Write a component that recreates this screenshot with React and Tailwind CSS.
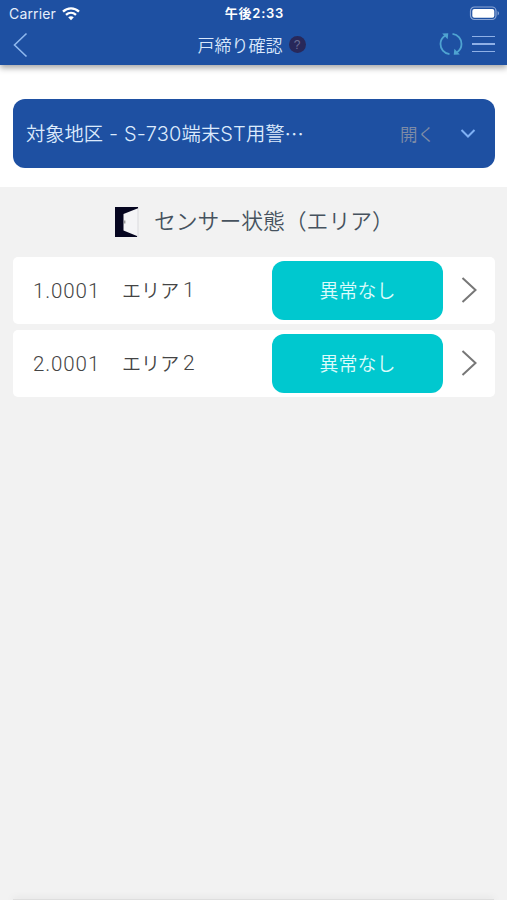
import React from 'react';

const AREAS = [
  { no: '1.0001', name: 'エリア', index: '1', status: '異常なし' },
  { no: '2.0001', name: 'エリア', index: '2', status: '異常なし' },
];

const StatusBar = () => (
  <div className="grid grid-cols-3 items-center h-[27px] pl-[9px] pr-[7px] text-white">
    <div className="flex items-center gap-[6px]">
      <span className="text-[14px] leading-none tracking-[0.15px] text-[#e6eefb] font-['Inter','Liberation_Sans',sans-serif]">Carrier</span>
      <svg width="18" height="14" viewBox="0 0 18 14" fill="none" stroke="currentColor" strokeWidth="2.3">
        <path d="M1 4.6 C5.5 0.2 12.5 0.2 17 4.6" />
        <path d="M4 7.9 C7 5.1 11 5.1 14 7.9" />
        <path d="M6.2 10.3 C7.9 8.9 10.1 8.9 11.8 10.3 L9 13.2 Z" fill="currentColor" stroke="none" />
      </svg>
    </div>
    <p className="text-center text-[13px] leading-none font-semibold whitespace-nowrap tracking-[0.75px] font-['Inter','Noto_Sans_CJK_JP',sans-serif]">午後2:33</p>
    <svg className="justify-self-end" width="31" height="15" viewBox="0 0 31 15" fill="none">
      <rect x="1.5" y="1" width="25.5" height="12.5" rx="4" stroke="#8ba6d6" strokeWidth="1.2" />
      <rect x="3.3" y="2.9" width="22" height="8.8" rx="2" fill="#fff" />
      <path d="M28.6 5 C30.5 5.9 30.5 8.6 28.6 9.5 Z" fill="#8ba6d6" />
    </svg>
  </div>
);

const Header = () => (
  <header className="relative h-[64.5px] bg-[#1e50a2] shadow-[0_3px_6px_rgba(0,0,0,0.35)]">
    <StatusBar />
    <div className="grid grid-cols-3 items-center h-[35px] pl-[12px] pr-[12px]">
      <svg width="18" height="26" viewBox="0 0 18 26" fill="none" stroke="#8fb8ee" strokeWidth="1.6">
        <path d="M14.5 1.5 L2.5 13 L14.5 24.5" />
      </svg>
      <div className="flex items-center justify-center gap-[6px] pr-[4px] whitespace-nowrap">
        <h1 className="text-[17px] leading-none text-[#d9e7fb] font-[350] font-['Noto_Sans_CJK_JP',sans-serif]">戸締り確認</h1>
        <span className="flex items-center justify-center w-[17px] h-[17px] rounded-full bg-[#28285a] text-[#6b7096] text-[12px] leading-none font-['Liberation_Sans',sans-serif]">?</span>
      </div>
      <div className="flex items-center justify-end gap-[9px]">
        <svg className="mb-[1px]" width="24" height="24" viewBox="0 0 24 24" fill="none" stroke="#4fa3d1" strokeWidth="1.8">
          <path d="M10.5 22.2 C4.8 21.3 1.5 17 1.5 12 C1.5 8.3 3.2 5.5 6 3.7" />
          <path d="M13.5 1.8 C19.2 2.7 22.5 7 22.5 12 C22.5 15.7 20.8 18.5 18 20.3" />
          <path d="M3.2 1.5 L9.3 1.3 L8.6 7.3 Z" fill="#4fa3d1" stroke="none" />
          <path d="M20.8 22.5 L14.7 22.7 L15.4 16.7 Z" fill="#4fa3d1" stroke="none" />
        </svg>
        <div className="flex flex-col gap-[6px] w-[23px] pb-[1px]">
          <span className="h-[1.6px] bg-[#8fb0e6]" />
          <span className="h-[1.6px] bg-[#8fb0e6]" />
          <span className="h-[1.6px] bg-[#8fb0e6]" />
        </div>
      </div>
    </div>
  </header>
);

const DistrictPicker = () => (
  <section className="h-[122.5px] bg-white pl-[13px] pr-[12px] pt-[34px]">
    <button className="flex items-center w-full h-[69.5px] pl-[13px] pr-[19px] rounded-[12px] bg-[#1e50a2] font-['Inter','Noto_Sans_CJK_JP',sans-serif]">
      <span className="flex flex-1 items-center pt-[2px] text-left text-[19.3px] leading-none text-[#dceafc] whitespace-pre font-[350]">
        <span>対象地区</span>
        <span className="text-[20px] tracking-[0.2px]"> - S-730</span>
        <span>端末</span>
        <span className="text-[20px] tracking-[0.2px]">ST</span>
        <span>用警</span>
        <span className="font-['Noto_Sans_CJK_JP',sans-serif]">…</span>
      </span>
      <span className="pt-[2px] text-[17.5px] leading-none text-[#7f8ca6] font-[350] mr-[25px]">開く</span>
      <svg width="16" height="11" viewBox="0 0 16 11" fill="none" stroke="#7fb0f5" strokeWidth="2">
        <path d="M1.5 2 L8 8.5 L14.5 2" />
      </svg>
    </button>
  </section>
);

const DoorIcon = () => (
  <svg width="24" height="30" viewBox="0 0 24 30">
    <rect x="0.5" y="0.5" width="22.5" height="29" fill="#f4f4f6" stroke="#c9c9d0" strokeWidth="0.6" />
    <path d="M0 0 H23 V1.3 L8.5 7 V23.5 L22 29 V30 H0 Z" fill="#060620" />
    <path d="M9.8 13.5 V16.5" stroke="#777" strokeWidth="1" />
  </svg>
);

const AreaRow = ({ area }) => (
  <li className="flex items-center h-[67.5px] pl-[20px] pr-[17px] rounded-[5px] bg-white">
    <div className="flex flex-1 items-center whitespace-nowrap text-[19px] leading-none text-[#444] font-[350] font-['Noto_Sans_CJK_JP',sans-serif]">
      <span className="w-[89px] pt-[1px] text-[20.5px] tracking-[0.9px] font-['Roboto',sans-serif]">{area.no}</span>
      <span className="w-[61px] pb-[1px] tracking-[0.1px]">{area.name}</span>
      <span className="pt-[1px] text-[21px] font-['Roboto',sans-serif]">{area.index}</span>
    </div>
    <span className="flex items-center justify-center w-[171px] h-[58.5px] pb-[1px] rounded-[12px] bg-[#00c8cf] text-[19px] leading-none text-[#dcfbfb] font-[350] font-['Noto_Sans_CJK_JP',sans-serif]">{area.status}</span>
    <svg className="ml-[18px] mb-[1px]" width="17" height="28" viewBox="0 0 17 28" fill="none" stroke="#777" strokeWidth="2">
      <path d="M1.5 2 L14.5 14 L1.5 26" />
    </svg>
  </li>
);

export default function App() {
  return (
    <div className="flex flex-col h-[900px] overflow-hidden bg-[#f2f2f2]">
      <Header />
      <DistrictPicker />
      <main className="flex-1 pl-[13px] pr-[12px]">
        <div className="flex items-center pl-[102px] gap-[15px] h-[69.5px] whitespace-nowrap">
          <DoorIcon />
          <h2 className="pb-[3px] text-[21.8px] leading-none text-[#46525e] font-[350] font-['Noto_Sans_CJK_JP',sans-serif]">センサー状態（エリア）</h2>
        </div>
        <ul className="flex flex-col gap-[5.5px]">
          {AREAS.map((area) => (
            <AreaRow key={area.no} area={area} />
          ))}
        </ul>
      </main>
      {/* 下部バーの影 */}
      <div className="h-[1px] mx-[13px] bg-[#dedede] shadow-[0_0_7px_rgba(0,0,0,0.25)]" />
    </div>
  );
}
